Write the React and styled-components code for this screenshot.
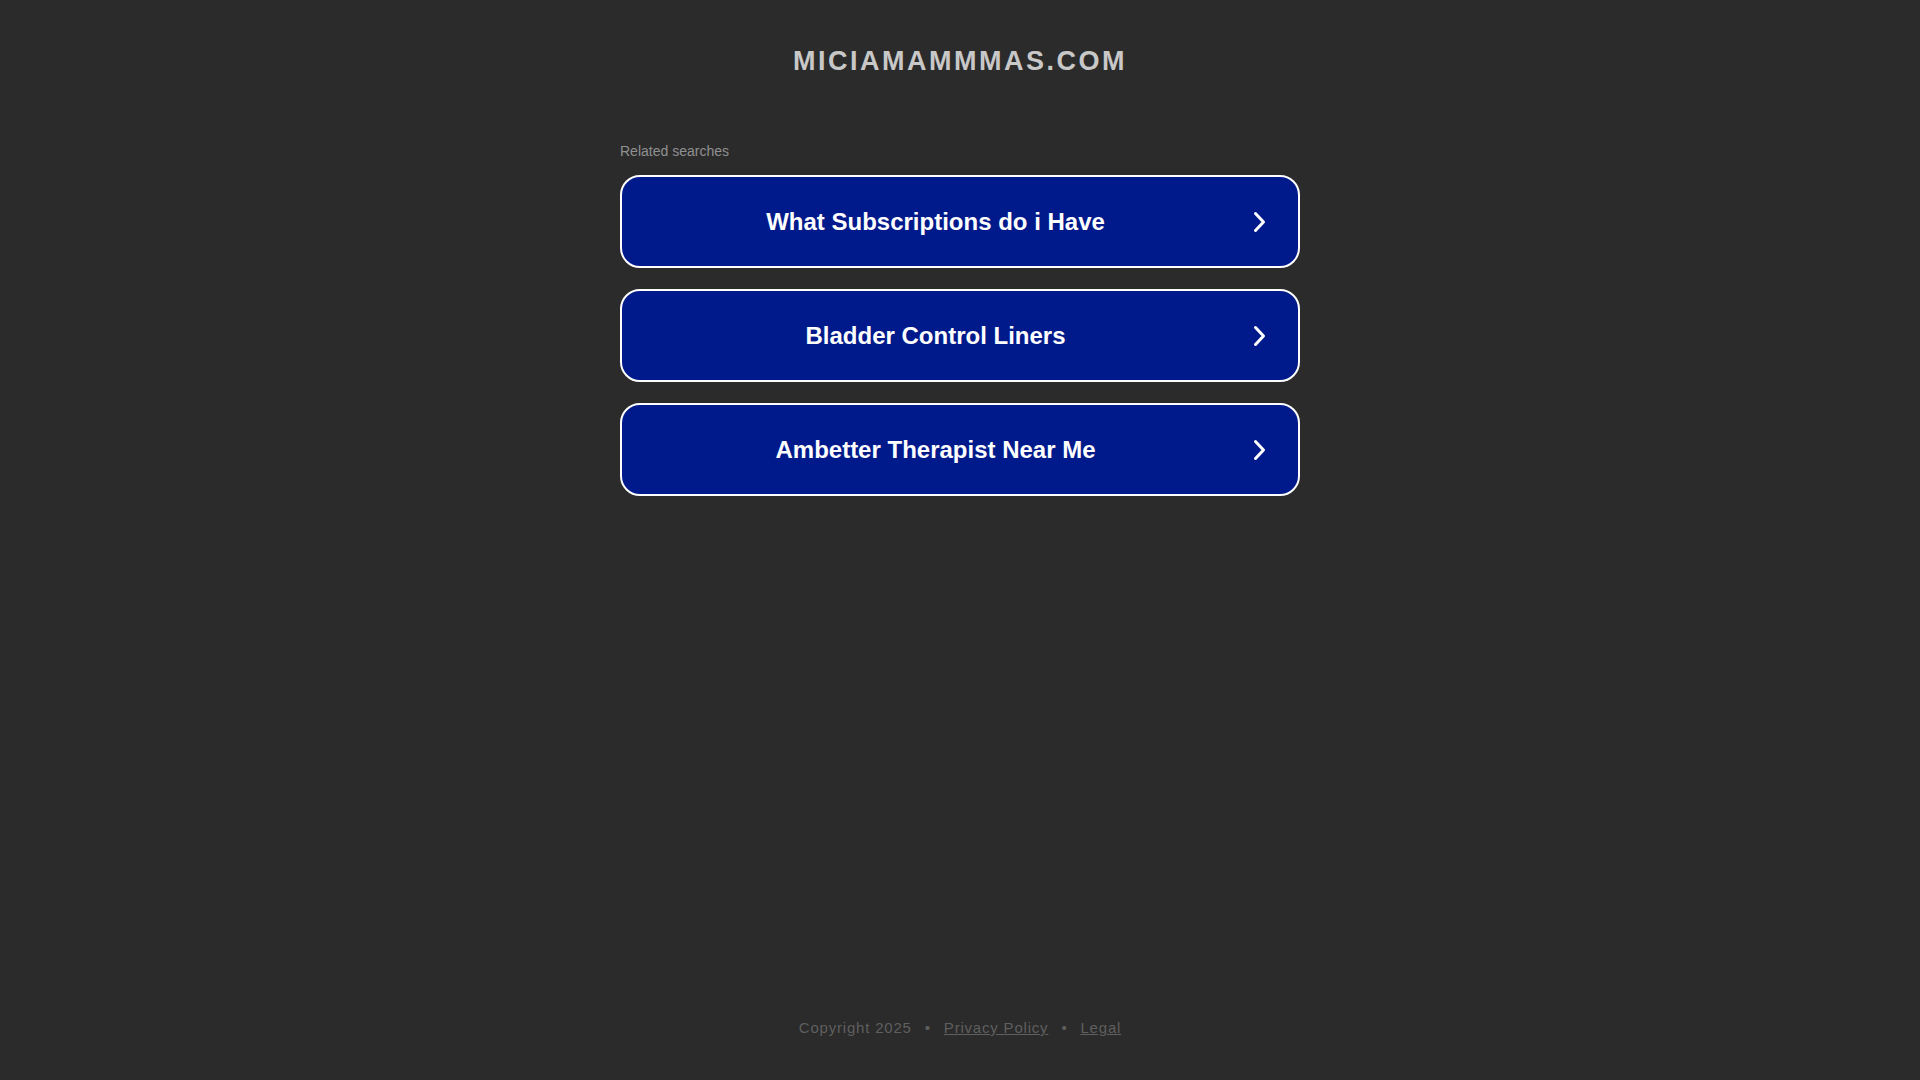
import styled, { createGlobalStyle } from "styled-components";

const GlobalStyle = createGlobalStyle`
  html, body {
    margin: 0;
    padding: 0;
    background: #2b2b2b;
    font-family: "Liberation Sans", Arial, sans-serif;
  }
`;

const Page = styled.div`
  min-height: 100vh;
  display: flex;
  flex-direction: column;
  align-items: center;
  box-sizing: border-box;
`;

const Title = styled.h1`
  margin: 46px 0 0;
  font-size: 27px;
  font-weight: 700;
  letter-spacing: 2.5px;
  color: #c8c8c8;
  text-transform: uppercase;
  line-height: 30px;
`;

const Content = styled.div`
  width: 680px;
  margin-top: 67px;
  display: flex;
  flex-direction: column;
`;

const Label = styled.p`
  margin: 0 0 16px;
  font-size: 14px;
  line-height: 16px;
  color: #909090;
`;

const SearchLink = styled.a`
  display: flex;
  align-items: center;
  box-sizing: border-box;
  height: 93px;
  margin-bottom: 21px;
  padding: 0 27px 0 0;
  border: 2px solid #fff;
  border-radius: 20px;
  background: #011a8b;
  color: #fff;
  text-decoration: none;
  cursor: pointer;
`;

const LinkText = styled.span`
  flex: 1;
  text-align: center;
  font-size: 24px;
  font-weight: 700;
`;

const Chevron = styled.svg`
  width: 20px;
  height: 22px;
  margin-left: 2px;
  flex-shrink: 0;
`;

const Footer = styled.footer`
  margin-top: auto;
  padding-bottom: 44px;
  font-size: 15px;
  letter-spacing: 0.8px;
  color: #5f5f5f;
  display: flex;
  gap: 13px;
  align-items: center;
`;

const FooterLink = styled.a`
  color: #5f5f5f;
  text-decoration: underline;
`;

const searches = [
  "What Subscriptions do i Have",
  "Bladder Control Liners",
  "Ambetter Therapist Near Me",
];

function App() {
  return (
    <>
      <GlobalStyle />
      <Page>
        <Title>miciamammmas.com</Title>
        <Content>
          <Label>Related searches</Label>
          {searches.map((s) => (
            <SearchLink key={s}>
              <LinkText>{s}</LinkText>
              <Chevron viewBox="0 0 20 22">
                <path
                  d="M4.5 2.5 L12.5 11 L4.5 19.5"
                  fill="none"
                  stroke="#fff"
                  strokeWidth="3"
                  strokeLinecap="round"
                  strokeLinejoin="round"
                />
              </Chevron>
            </SearchLink>
          ))}
        </Content>
        <Footer>
          <span>Copyright 2025</span>
          <span>•</span>
          <FooterLink>Privacy Policy</FooterLink>
          <span>•</span>
          <FooterLink>Legal</FooterLink>
        </Footer>
      </Page>
    </>
  );
}

export default App;
